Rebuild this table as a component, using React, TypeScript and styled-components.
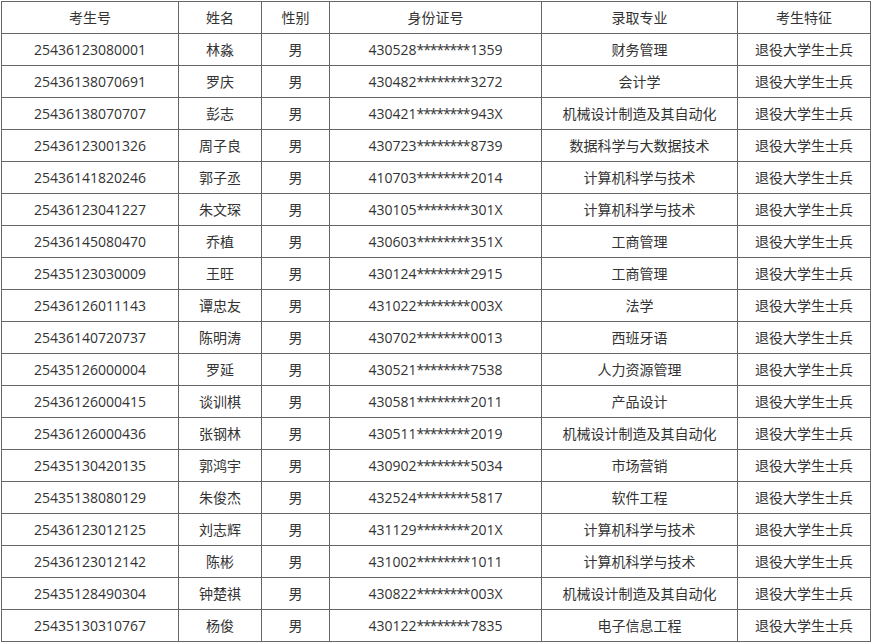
import { FC } from "react";
import styled, { createGlobalStyle } from "styled-components";

const GlobalStyle = createGlobalStyle`
  html, body {
    margin: 0;
    padding: 0;
    background: #fff;
  }
`;

interface IStudent {
  id: string;
  name: string;
  gender: string;
  idCard: string;
  major: string;
  feature: string;
}

const HEADERS = ["考生号", "姓名", "性别", "身份证号", "录取专业", "考生特征"];
const WIDTHS = [177, 83, 68, 212, 196, 133];

const FEATURE = "退役大学生士兵";

const students: IStudent[] = [
  ["25436123080001", "林淼", "430528********1359", "财务管理"],
  ["25436138070691", "罗庆", "430482********3272", "会计学"],
  ["25436138070707", "彭志", "430421********943X", "机械设计制造及其自动化"],
  ["25436123001326", "周子良", "430723********8739", "数据科学与大数据技术"],
  ["25436141820246", "郭子丞", "410703********2014", "计算机科学与技术"],
  ["25436123041227", "朱文琛", "430105********301X", "计算机科学与技术"],
  ["25436145080470", "乔植", "430603********351X", "工商管理"],
  ["25435123030009", "王旺", "430124********2915", "工商管理"],
  ["25436126011143", "谭忠友", "431022********003X", "法学"],
  ["25436140720737", "陈明涛", "430702********0013", "西班牙语"],
  ["25435126000004", "罗延", "430521********7538", "人力资源管理"],
  ["25436126000415", "谈训棋", "430581********2011", "产品设计"],
  ["25436126000436", "张钢林", "430511********2019", "机械设计制造及其自动化"],
  ["25435130420135", "郭鸿宇", "430902********5034", "市场营销"],
  ["25435138080129", "朱俊杰", "432524********5817", "软件工程"],
  ["25436123012125", "刘志辉", "431129********201X", "计算机科学与技术"],
  ["25436123012142", "陈彬", "431002********1011", "计算机科学与技术"],
  ["25435128490304", "钟楚祺", "430822********003X", "机械设计制造及其自动化"],
  ["25435130310767", "杨俊", "430122********7835", "电子信息工程"],
].map(([id, name, idCard, major]) => ({
  id,
  name,
  gender: "男",
  idCard,
  major,
  feature: FEATURE,
}));

// 身份证号中间的星号单独排，字距收紧一点
const IdCard: FC<{ value: string }> = ({ value }) => {
  const head = value.slice(0, 6);
  const mask = value.slice(6, 14);
  const tail = value.slice(14);
  return (
    <>
      {head}
      <Mask>{mask}</Mask>
      {tail}
    </>
  );
};

const App: FC = () => {
  return (
    <Page>
      <GlobalStyle />
      <Table>
        <colgroup>
          {WIDTHS.map((w, i) => (
            <col key={i} style={{ width: w }} />
          ))}
        </colgroup>
        <thead>
          <tr>
            {HEADERS.map((h) => (
              <Cell as="th" key={h}>
                <Text>{h}</Text>
              </Cell>
            ))}
          </tr>
        </thead>
        <tbody>
          {students.map((s) => (
            <tr key={s.id}>
              <Cell><Text>{s.id}</Text></Cell>
              <Cell><Text>{s.name}</Text></Cell>
              <Cell><Text>{s.gender}</Text></Cell>
              <Cell>
                <Text>
                  <IdCard value={s.idCard} />
                </Text>
              </Cell>
              <Cell><Text>{s.major}</Text></Cell>
              <Cell><Text>{s.feature}</Text></Cell>
            </tr>
          ))}
        </tbody>
      </Table>
    </Page>
  );
};

const Page = styled.div`
  padding: 1px 0 0 1px;
  background: #fff;
`;

const Table = styled.table`
  border-collapse: collapse;
  table-layout: fixed;
  width: 869px;
  font-family: "Open Sans", "Noto Sans CJK SC", sans-serif;
  font-size: 14px;
  color: #333;
`;

const Cell = styled.td`
  height: 29px;
  padding: 1px 4px 1px;
  border: 1px solid #666;
  text-align: center;
  vertical-align: middle;
  font-weight: normal;
  white-space: nowrap;
`;

const Text = styled.div`
  height: 20px;
  line-height: 20px;
`;

const Mask = styled.span`
  letter-spacing: -1.1px;
  margin-right: 1px;
`;

export default App;
